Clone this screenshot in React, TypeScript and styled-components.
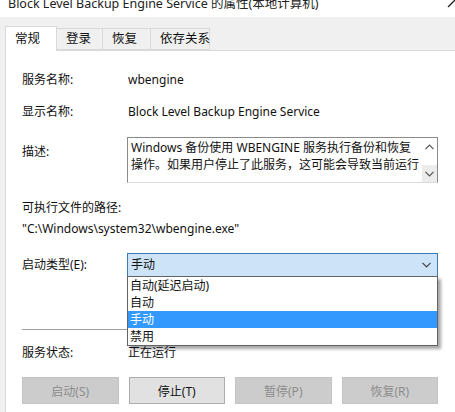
import React from "react";
import styled, { createGlobalStyle } from "styled-components";

const GlobalStyle = createGlobalStyle`
  html, body {
    margin: 0;
    padding: 0;
    background: #f0f0f0;
  }
  body {
    font-family: "Noto Sans", "Noto Sans CJK SC", sans-serif;
    font-size: 12px;
    color: #111;
  }
`;

const Window = styled.div`
  width: 455px;
  height: 412px;
  overflow: hidden;
  display: flex;
  flex-direction: column;
  background: #f0f0f0;
`;

const TitleBar = styled.div`
  height: 17px;
  flex: none;
  background: #ffffff;
  overflow: hidden;
  display: flex;
  justify-content: space-between;
  padding-left: 8px;
`;

const TitleText = styled.div`
  font-size: 12.5px;
  line-height: 18px;
  margin-top: -5px;
  color: #222;
  white-space: nowrap;
`;

const Close = styled.svg`
  margin-top: -2px;
  margin-right: -2px;
`;

const Body = styled.div`
  flex: 1;
  padding: 9px 0 0 5px;
  display: flex;
  flex-direction: column;
`;

const Tabs = styled.div`
  display: flex;
  align-items: flex-end;
  height: 24px;
  position: relative;
  z-index: 1;
`;

const Tab = styled.div<{ $active?: boolean; $w: number }>`
  width: ${(p) => p.$w}px;
  box-sizing: border-box;
  height: ${(p) => (p.$active ? 25 : 22)}px;
  margin-bottom: ${(p) => (p.$active ? -1 : 0)}px;
  background: ${(p) => (p.$active ? "#ffffff" : "#f0f0f0")};
  border: 1px solid #d9d9d9;
  border-bottom: ${(p) => (p.$active ? "none" : "1px solid #d9d9d9")};
  margin-right: -1px;
  font-size: 12.5px;
  line-height: ${(p) => (p.$active ? 23 : 20)}px;
  padding-left: 9px;
  white-space: nowrap;
  color: #111;
`;

const Panel = styled.div`
  flex: 1;
  background: #ffffff;
  border: 1px solid #d9d9d9;
  border-right: none;
  border-bottom: none;
  padding: 20px 17px 0 16px;
  display: flex;
  flex-direction: column;
`;

const Row = styled.div<{ $mt?: number; $align?: string }>`
  display: grid;
  grid-template-columns: 105px 1fr;
  align-items: ${(p) => p.$align || "center"};
  margin-top: ${(p) => p.$mt || 0}px;
  line-height: 18px;
`;

const Label = styled.div<{ $pt?: number }>`
  padding-top: ${(p) => p.$pt || 0}px;
`;

const Value = styled.div`
  padding-left: 1px;
  white-space: nowrap;
`;

const Line = styled.div<{ $mt?: number }>`
  margin-top: ${(p) => p.$mt || 0}px;
  line-height: 18px;
  white-space: nowrap;
`;

const TextBox = styled.div`
  height: 46px;
  box-sizing: border-box;
  border: 1px solid #8a8a8a;
  border-bottom-color: #dcdcdc;
  display: flex;
  line-height: 17px;
`;

const TextContent = styled.div`
  flex: 1;
  padding: 1px 0 0 3px;
  white-space: nowrap;
  overflow: hidden;
`;

const ScrollBar = styled.div`
  width: 15px;
  display: flex;
  flex-direction: column;
  justify-content: space-between;
  align-items: center;
`;

const ScrollBtn = styled.div<{ $shade?: boolean }>`
  width: 15px;
  height: 17px;
  display: flex;
  align-items: center;
  justify-content: center;
  background: ${(p) => (p.$shade ? "#ececec" : "transparent")};
`;

const Combo = styled.div`
  position: relative;
  height: 24px;
  box-sizing: border-box;
  border: 1px solid #3c78b4;
  background: #cde3f8;
  display: flex;
  align-items: center;
  justify-content: space-between;
  padding: 0 6px 0 3px;
`;

const DropList = styled.div`
  position: absolute;
  top: 100%;
  left: -1px;
  right: -1px;
  background: #ffffff;
  border: 1px solid #646464;
  box-shadow: 3px 3px 3px rgba(0, 0, 0, 0.35);
  z-index: 5;
`;

const DropItem = styled.div<{ $selected?: boolean }>`
  height: 17px;
  line-height: 17px;
  padding-left: 2px;
  background: ${(p) => (p.$selected ? "#3399ff" : "transparent")};
  color: ${(p) => (p.$selected ? "#ffffff" : "#111")};
`;

const Separator = styled.div`
  height: 1px;
  background: #a0a0a0;
  margin-top: 52px;
`;

const Buttons = styled.div`
  display: grid;
  grid-template-columns: repeat(4, 1fr);
  gap: 10px;
  margin-top: 15px;
`;

const Button = styled.div<{ $disabled?: boolean }>`
  height: 27px;
  box-sizing: border-box;
  display: flex;
  align-items: center;
  justify-content: center;
  background: ${(p) => (p.$disabled ? "#cccccc" : "#e1e1e1")};
  border: 1px solid ${(p) => (p.$disabled ? "#c4c4c4" : "#adadad")};
  color: ${(p) => (p.$disabled ? "#8c8c8c" : "#111")};
`;

const Chevron = ({ up = false, color = "#555" }: { up?: boolean; color?: string }) => (
  <svg width="9" height="6" viewBox="0 0 9 6">
    <path
      d={up ? "M0.5 5.2 L4.5 1.2 L8.5 5.2" : "M0.5 0.8 L4.5 4.8 L8.5 0.8"}
      fill="none"
      stroke={color}
      strokeWidth="1.2"
    />
  </svg>
);

const App: React.FC = () => {
  return (
    <>
      <GlobalStyle />
      <Window>
        <TitleBar>
          <TitleText>Block Level Backup Engine Service 的属性(本地计算机)</TitleText>
          <Close width="10" height="10" viewBox="0 0 10 10">
            <path d="M1 9 L9 1" stroke="#222" strokeWidth="1.3" />
          </Close>
        </TitleBar>
        <Body>
          <Tabs>
            <Tab $active $w={52}>常规</Tab>
            <Tab $w={47}>登录</Tab>
            <Tab $w={49}>恢复</Tab>
            <Tab $w={60}>依存关系</Tab>
          </Tabs>
          <Panel>
            <Row>
              <Label>服务名称:</Label>
              <Value>wbengine</Value>
            </Row>
            <Row $mt={14}>
              <Label>显示名称:</Label>
              <Value>Block Level Backup Engine Service</Value>
            </Row>
            <Row $mt={16} $align="start">
              <Label $pt={6}>描述:</Label>
              <TextBox>
                <TextContent>
                  Windows 备份使用 WBENGINE 服务执行备份和恢复
                  <br />
                  操作。如果用户停止了此服务，这可能会导致当前运行
                </TextContent>
                <ScrollBar>
                  <ScrollBtn>
                    <Chevron up />
                  </ScrollBtn>
                  <ScrollBtn $shade>
                    <Chevron />
                  </ScrollBtn>
                </ScrollBar>
              </TextBox>
            </Row>
            <Line $mt={16}>可执行文件的路径:</Line>
            <Line $mt={3}>"C:\Windows\system32\wbengine.exe"</Line>
            <Row $mt={15}>
              <Label>启动类型(E):</Label>
              <Combo>
                <span>手动</span>
                <Chevron color="#444" />
                <DropList>
                  <DropItem>自动(延迟启动)</DropItem>
                  <DropItem>自动</DropItem>
                  <DropItem $selected>手动</DropItem>
                  <DropItem>禁用</DropItem>
                </DropList>
              </Combo>
            </Row>
            <Separator />
            <Row $mt={14}>
              <Label>服务状态:</Label>
              <Value>正在运行</Value>
            </Row>
            <Buttons>
              <Button $disabled>启动(S)</Button>
              <Button>停止(T)</Button>
              <Button $disabled>暂停(P)</Button>
              <Button $disabled>恢复(R)</Button>
            </Buttons>
          </Panel>
        </Body>
      </Window>
    </>
  );
};

export default App;
